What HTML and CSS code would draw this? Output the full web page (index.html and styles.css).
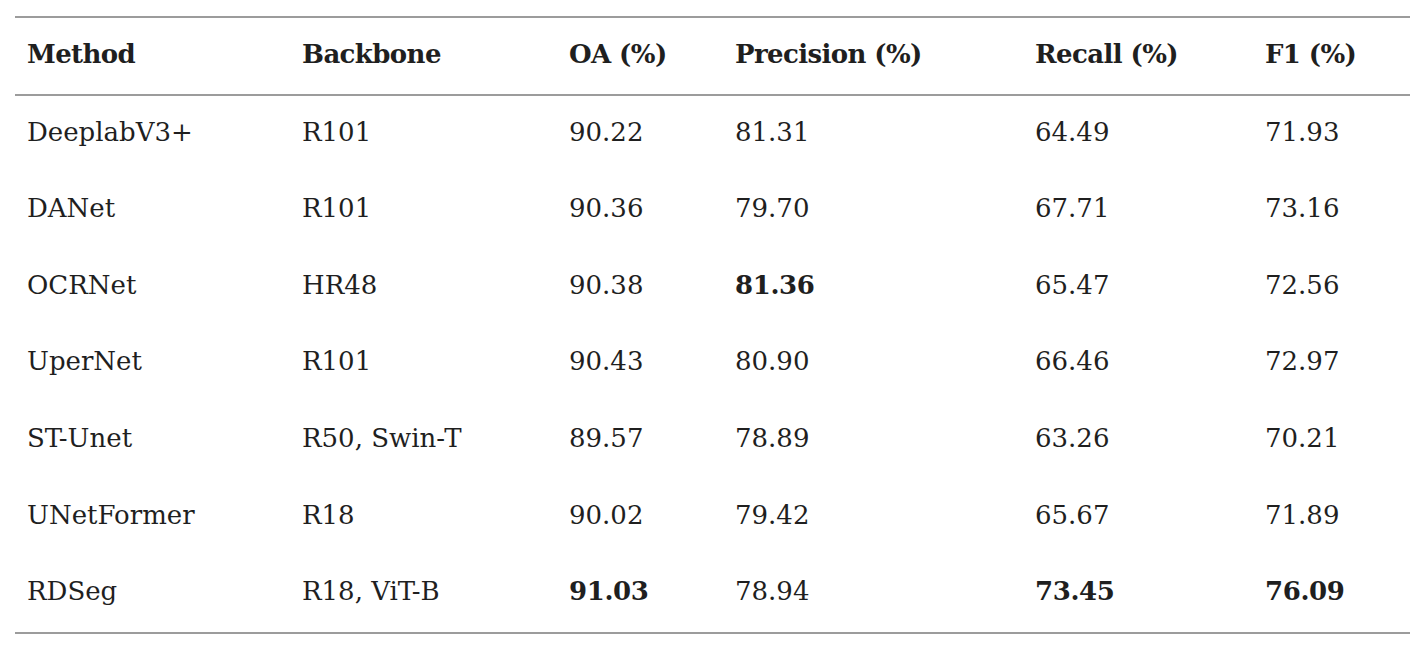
FILE: index.html
```html
<!DOCTYPE html>
<html lang="en">
<head>
<meta charset="utf-8">
<title>Comparison table</title>
<link rel="stylesheet" href="styles.css">
</head>
<body>
<table class="results">
  <colgroup>
    <col class="c-method">
    <col class="c-backbone">
    <col class="c-oa">
    <col class="c-prec">
    <col class="c-rec">
    <col class="c-f1">
  </colgroup>
  <thead>
    <tr>
      <th>Method</th>
      <th>Backbone</th>
      <th>OA (%)</th>
      <th>Precision (%)</th>
      <th>Recall (%)</th>
      <th>F1 (%)</th>
    </tr>
  </thead>
  <tbody>
    <tr><td>DeeplabV3+</td><td>R101</td><td>90.22</td><td>81.31</td><td>64.49</td><td>71.93</td></tr>
    <tr><td>DANet</td><td>R101</td><td>90.36</td><td>79.70</td><td>67.71</td><td>73.16</td></tr>
    <tr><td>OCRNet</td><td>HR48</td><td>90.38</td><td><b>81.36</b></td><td>65.47</td><td>72.56</td></tr>
    <tr><td>UperNet</td><td>R101</td><td>90.43</td><td>80.90</td><td>66.46</td><td>72.97</td></tr>
    <tr><td>ST-Unet</td><td>R50, Swin-T</td><td>89.57</td><td>78.89</td><td>63.26</td><td>70.21</td></tr>
    <tr><td>UNetFormer</td><td>R18</td><td>90.02</td><td>79.42</td><td>65.67</td><td>71.89</td></tr>
    <tr><td>RDSeg</td><td>R18, ViT-B</td><td><b>91.03</b></td><td>78.94</td><td><b>73.45</b></td><td><b>76.09</b></td></tr>
  </tbody>
</table>
</body>
</html>
```
FILE: styles.css
```css
html, body {
  margin: 0;
  padding: 0;
  background: #ffffff;
}

body {
  padding: 16px 18px 0 15px;
  font-family: "DejaVu Serif", "Liberation Serif", serif;
  color: #1f1f1f;
}

.results {
  border-collapse: collapse;
  table-layout: fixed;
  width: 1395px;
  font-size: 26px;
}

.c-method { width: 275px; }
.c-backbone { width: 267px; }
.c-oa { width: 166px; }
.c-prec { width: 300px; }
.c-rec { width: 230px; }
.c-f1 { width: 157px; }

.results thead {
  border-top: 2px solid #9c9c9c;
  border-bottom: 2px solid #9c9c9c;
}

.results tbody {
  border-bottom: 2px solid #9c9c9c;
}

.results th,
.results td {
  text-align: left;
  vertical-align: middle;
  padding: 0 0 5px 12px;
  white-space: nowrap;
}

.results th {
  height: 71px;
  font-weight: bold;
  letter-spacing: -0.6px;
}

.results td {
  height: 71.57px;
  font-weight: normal;
}

.results b {
  font-weight: bold;
  letter-spacing: -0.4px;
}
```
